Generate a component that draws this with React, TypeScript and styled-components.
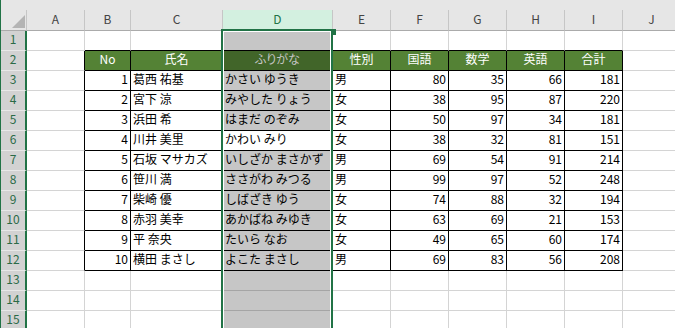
import React from "react";
import styled, { createGlobalStyle } from "styled-components";

// ─── Palette ──────────────────────────────────────────────────────────────────

const GREEN = "#217346";
const GRID = "#d4d4d4";
const GRID_SEL = "#a5a5a5";
const HEAD_FILL = "#548235";
const HEAD_FILL_SEL = "#416529";
const SEL_FILL = "#c6c6c6";

const GlobalStyle = createGlobalStyle`
  html, body {
    margin: 0;
    padding: 0;
    background: #fff;
    overflow: hidden;
  }
  body {
    font-family: "Noto Sans CJK JP", "Noto Sans", sans-serif;
  }
`;

// ─── Frame ────────────────────────────────────────────────────────────────────

const Sheet = styled.div`
  width: 675px;
  height: 328px;
  overflow: hidden;
  box-sizing: border-box;
  border-left: 1px solid ${GREEN};
  background: #fff;
`;

const TopStrip = styled.div`
  height: 10px;
  background: #e6e6e6;
`;

const Grid = styled.div`
  position: relative;
  display: grid;
  grid-template-columns: 26px 58px 46px 92px 110px repeat(6, 58px);
  grid-template-rows: 21px repeat(15, 20px);
  font-size: 12px;
`;

// ─── Headers ──────────────────────────────────────────────────────────────────

const Corner = styled.div`
  box-sizing: border-box;
  display: flex;
  justify-content: flex-end;
  align-items: flex-end;
  padding: 0 1px 2px 0;
  background: #e6e6e6;
  border-right: 1px solid #c6c6c6;
  border-bottom: 1px solid #ababab;
`;

const CornerMark = styled.div`
  width: 13px;
  height: 13px;
  background: #b4b4b4;
  clip-path: polygon(100% 0, 100% 100%, 0 100%);
`;

const ColHead = styled.div<{ $active?: boolean }>`
  box-sizing: border-box;
  padding-top: 1px;
  line-height: 15px;
  text-align: center;
  background: ${({ $active }) => ($active ? "#d3f0e0" : "#e6e6e6")};
  color: ${({ $active }) => ($active ? GREEN : "#444")};
  border-right: 1px solid #c6c6c6;
  border-bottom: 1px solid ${({ $active }) => ($active ? GREEN : "#ababab")};
`;

const RowHead = styled.div`
  box-sizing: border-box;
  line-height: 15px;
  text-align: center;
  background: #d2d2d2;
  color: #2a6a47;
  border-right: 2px solid ${GREEN};
  border-bottom: 1px solid #e8e8e8;
`;

// ─── Cells ────────────────────────────────────────────────────────────────────

type Align = "left" | "right" | "center";

interface CellProps {
  $align: Align;
  $fill: string;
  $ink: string;
  $right: string;
  $bottom: string;
  $head?: boolean;
}

const Cell = styled.div<CellProps>`
  box-sizing: border-box;
  padding: 0 2px;
  line-height: 15px;
  white-space: nowrap;
  overflow: hidden;
  text-align: ${({ $align }) => $align};
  background: ${({ $fill }) => $fill};
  color: ${({ $ink }) => $ink};
  border-right: 1px solid ${({ $right }) => $right};
  border-bottom: 1px solid ${({ $bottom }) => $bottom};
  font-feature-settings: ${({ $head }) => ($head ? '"palt"' : "normal")};
`;

// Selection frame over column D
const Selection = styled.div`
  position: absolute;
  left: 220px;
  top: 19px;
  width: 112px;
  bottom: -10px;
  box-sizing: border-box;
  border: 2px solid ${GREEN};
  box-shadow: inset 0 0 0 1px #fff;
  pointer-events: none;
`;

const FillHandle = styled.div`
  position: absolute;
  left: 330px;
  top: 19px;
  width: 5px;
  height: 6px;
  background: ${GREEN};
`;

// ─── Data ─────────────────────────────────────────────────────────────────────

const COLS = ["A", "B", "C", "D", "E", "F", "G", "H", "I", "J"];
const HEADER = ["No", "氏名", "ふりがな", "性別", "国語", "数学", "英語", "合計"];

const ROWS: (string | number)[][] = [
  [1, "葛西 祐基", "かさい ゆうき", "男", 80, 35, 66, 181],
  [2, "宮下 涼", "みやした りょう", "女", 38, 95, 87, 220],
  [3, "浜田 希", "はまだ のぞみ", "女", 50, 97, 34, 181],
  [4, "川井 美里", "かわい みり", "女", 38, 32, 81, 151],
  [5, "石坂 マサカズ", "いしざか まさかず", "男", 69, 54, 91, 214],
  [6, "笹川 満", "ささがわ みつる", "男", 99, 97, 52, 248],
  [7, "柴崎 優", "しばざき ゆう", "女", 74, 88, 32, 194],
  [8, "赤羽 美幸", "あかばね みゆき", "女", 63, 69, 21, 153],
  [9, "平 奈央", "たいら なお", "女", 49, 65, 60, 174],
  [10, "横田 まさし", "よこた まさし", "男", 69, 83, 56, 208],
];

const SEL_COL = 3;
const ACTIVE_ROW = 6;

function cellProps(r: number, c: number): CellProps & { text: string } {
  const inTable = r >= 2 && r <= 12 && c >= 1 && c <= 8;
  const selected = c === SEL_COL;

  let text = "";
  let align: Align = "left";
  if (inTable && r === 2) {
    text = HEADER[c - 1];
    align = "center";
  } else if (inTable) {
    const v = ROWS[r - 3][c - 1];
    text = String(v);
    align = typeof v === "number" ? "right" : "left";
  }

  let fill = "#fff";
  let ink = "#000";
  if (inTable && r === 2) {
    fill = selected ? HEAD_FILL_SEL : HEAD_FILL;
    ink = selected ? SEL_FILL : "#fff";
  } else if (selected && r !== ACTIVE_ROW) {
    fill = SEL_FILL;
  }

  const plain = selected ? GRID_SEL : GRID;
  const right = inTable || (c === 0 && r >= 2 && r <= 12) ? "#000" : plain;
  const bottom = inTable || (r === 1 && c >= 1 && c <= 8) ? "#000" : plain;

  return {
    text,
    $align: align,
    $fill: fill,
    $ink: ink,
    $right: right,
    $bottom: bottom,
    $head: inTable && r === 2,
  };
}

// ─── Component ────────────────────────────────────────────────────────────────

export default function App(): React.ReactElement {
  const rows = Array.from({ length: 15 }, (_, i) => i + 1);

  return (
    <>
      <GlobalStyle />
      <Sheet>
        <TopStrip />
        <Grid>
          <Corner>
            <CornerMark />
          </Corner>
          {COLS.map((name, c) => (
            <ColHead key={name} $active={c === SEL_COL}>
              {name}
            </ColHead>
          ))}

          {rows.map((r) => (
            <React.Fragment key={r}>
              <RowHead>{r}</RowHead>
              {COLS.map((name, c) => {
                const { text, ...props } = cellProps(r, c);
                return (
                  <Cell key={name + r} {...props}>
                    {text}
                  </Cell>
                );
              })}
            </React.Fragment>
          ))}

          <Selection />
          <FillHandle />
        </Grid>
      </Sheet>
    </>
  );
}
